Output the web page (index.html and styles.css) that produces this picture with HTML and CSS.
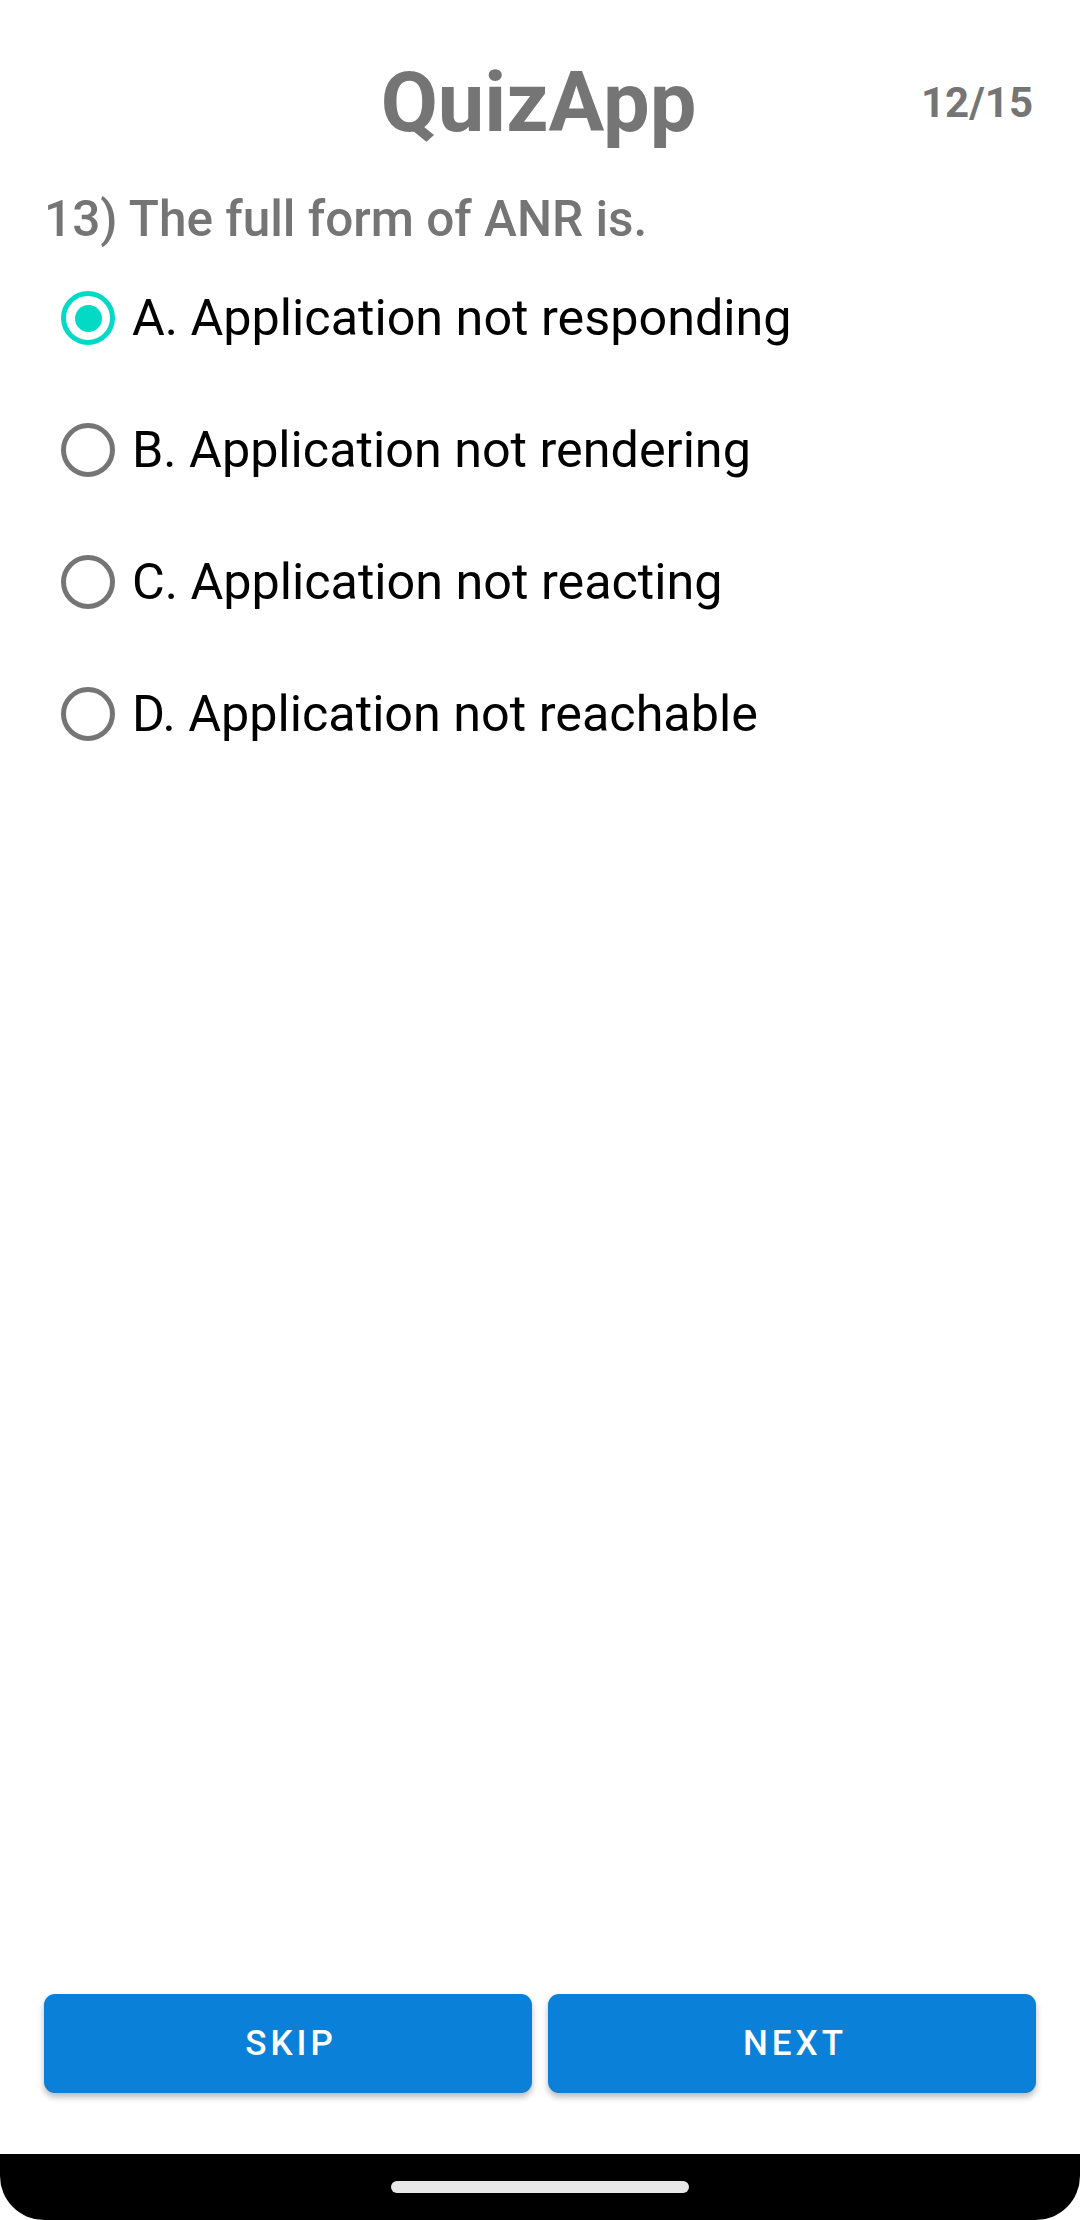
FILE: index.html
```html
<!DOCTYPE html>
<html lang="en">
<head>
<meta charset="utf-8">
<title>QuizApp</title>
<link rel="stylesheet" href="styles.css">
</head>
<body>
<div class="screen">
  <main class="app">
    <header class="header">
      <div class="header-side"></div>
      <h1 class="title">QuizApp</h1>
      <div class="header-side counter">12/15</div>
    </header>
    <p class="question">13) The full form of ANR is.</p>
    <div class="options">
      <label class="option">
        <span class="radio checked"><span class="dot"></span></span>
        <span class="option-text">A. Application not responding</span>
      </label>
      <label class="option">
        <span class="radio"></span>
        <span class="option-text">B. Application not rendering</span>
      </label>
      <label class="option">
        <span class="radio"></span>
        <span class="option-text">C. Application not reacting</span>
      </label>
      <label class="option">
        <span class="radio"></span>
        <span class="option-text">D. Application not reachable</span>
      </label>
    </div>
    <div class="spacer"></div>
    <div class="actions">
      <button class="btn">SKIP</button>
      <button class="btn">NEXT</button>
    </div>
  </main>
  <div class="navbar"><span class="pill"></span></div>
</div>
</body>
</html>
```
FILE: styles.css
```css
* { box-sizing: border-box; }
html, body {
  margin: 0;
  padding: 0;
  background: #ffffff;
}
body {
  font-family: Roboto, "Noto Sans", "Liberation Sans", sans-serif;
  width: 1080px;
  height: 2220px;
  overflow: hidden;
}
.screen {
  width: 1080px;
  height: 2220px;
  display: flex;
  flex-direction: column;
  background: #ffffff;
}
.app {
  flex: 1;
  display: flex;
  flex-direction: column;
}
.header {
  display: grid;
  grid-template-columns: 1fr auto 1fr;
  align-items: center;
  padding: 55px 47px 0 44px;
}
.title {
  margin: 0;
  font-size: 83px;
  line-height: 96px;
  font-weight: 700;
  color: #757575;
}
.counter {
  justify-self: end;
  font-size: 42px;
  line-height: 48px;
  font-weight: 700;
  color: #757575;
}
.question {
  margin: 39px 0 0 0;
  padding-left: 44px;
  font-size: 49.5px;
  line-height: 58px;
  font-weight: 500;
  color: #757575;
}
.options {
  margin-top: 4px;
  display: flex;
  flex-direction: column;
}
.option {
  height: 132px;
  display: flex;
  align-items: center;
  padding-left: 61px;
  gap: 17px;
}
.radio {
  width: 54px;
  height: 54px;
  border-radius: 50%;
  border: 5.5px solid #757575;
  display: flex;
  align-items: center;
  justify-content: center;
  flex: none;
}
.radio.checked {
  border-color: #03dac5;
}
.dot {
  width: 27px;
  height: 27px;
  border-radius: 50%;
  background: #03dac5;
}
.option-text {
  font-size: 50.3px;
  line-height: 58px;
  color: #000000;
}
.spacer { flex: 1; }
.actions {
  display: flex;
  gap: 16px;
  padding: 0 44px;
  margin-bottom: 61px;
}
.btn {
  flex: 1;
  height: 99px;
  border: none;
  border-radius: 11px;
  background: #0a80d8;
  color: #ffffff;
  font-family: Roboto, "Noto Sans", "Liberation Sans", sans-serif;
  font-size: 35px;
  font-weight: 500;
  letter-spacing: 4px;
  padding: 0 0 0 6px;
  box-shadow: 0 4px 6px rgba(0, 0, 0, 0.28);
}
.navbar {
  height: 66px;
  background: #000000;
  border-radius: 0 0 44px 44px;
  display: flex;
  justify-content: center;
  padding-top: 27px;
}
.pill {
  width: 298px;
  height: 12px;
  border-radius: 6px;
  background: #e8e8e8;
}
```
